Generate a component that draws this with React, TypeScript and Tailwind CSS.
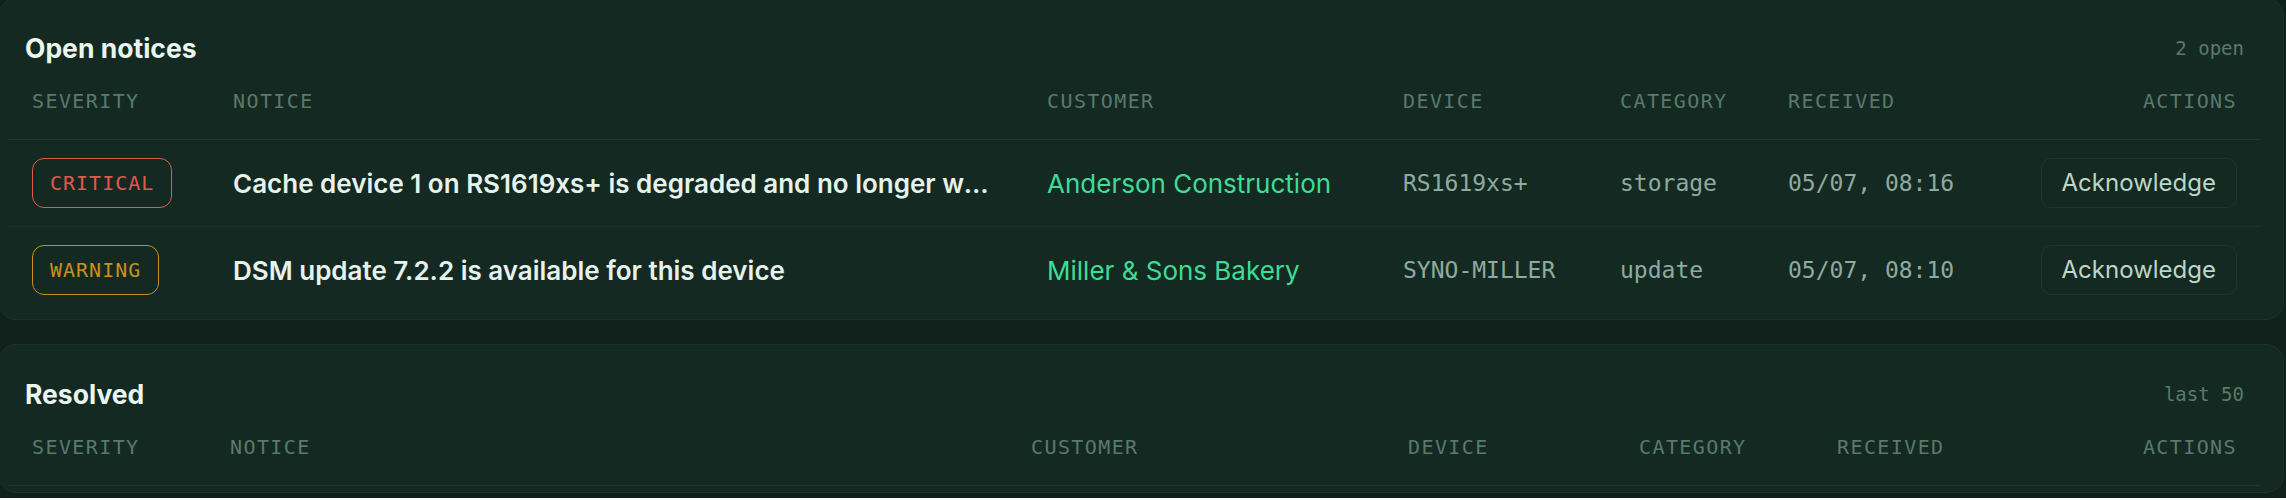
import React from 'react'

type Severity = 'critical' | 'warning'

type Notice = {
  id: string
  severity: Severity
  title: string
  customer: string
  device: string
  category: string
  received: string
}

const openNotices: Notice[] = [
  {
    id: 'n1',
    severity: 'critical',
    title: 'Cache device 1 on RS1619xs+ is degraded and no longer working properly',
    customer: 'Anderson Construction',
    device: 'RS1619xs+',
    category: 'storage',
    received: '05/07, 08:16',
  },
  {
    id: 'n2',
    severity: 'warning',
    title: 'DSM update 7.2.2 is available for this device',
    customer: 'Miller & Sons Bakery',
    device: 'SYNO-MILLER',
    category: 'update',
    received: '05/07, 08:10',
  },
]

const sans = "font-['Inter',_'Noto_Sans',_sans-serif]"
const mono = "font-['DejaVu_Sans_Mono',_'Liberation_Mono',_monospace]"

const severityStyles: Record<Severity, string> = {
  critical: 'border-[#e5574b] text-[#e5574b]',
  warning: 'border-[#c8911c] text-[#c8911c]',
}

function SeverityBadge({ severity }: { severity: Severity }) {
  return (
    <span
      className={`inline-flex h-[50px] items-center rounded-[12px] border-[1.5px] px-[17px] text-[20px] uppercase tracking-[1px] ${mono} ${severityStyles[severity]}`}
    >
      {severity}
    </span>
  )
}

const columns = ['Severity', 'Notice', 'Customer', 'Device', 'Category', 'Received', 'Actions']

function NoticeTable({ widths, rows }: { widths: number[]; rows: Notice[] }) {
  return (
    <table className="w-full table-fixed border-collapse">
      <colgroup>
        {widths.map((w, i) => (
          <col key={i} style={{ width: w }} />
        ))}
        <col />
      </colgroup>
      <thead>
        <tr className="border-b border-[#1c3830]">
          {columns.map((c) => (
            <th
              key={c}
              className={`px-[24px] pt-[21px] pb-[25px] text-left text-[20px] font-normal uppercase leading-[26px] tracking-[1.4px] text-[#587a6c] last:text-right ${mono}`}
            >
              {c}
            </th>
          ))}
        </tr>
      </thead>
      <tbody>
        {rows.map((n) => (
          <tr key={n.id} className="border-b border-[#1a322a] last:border-0">
            <td className="px-[24px] py-[18px]">
              <SeverityBadge severity={n.severity} />
            </td>
            <td className={`truncate px-[24px] text-[26px] font-semibold text-[#e6f2ec] ${sans}`}>
              {n.title}
            </td>
            <td className={`truncate px-[24px] text-[26px] text-[#3fdc98] ${sans}`}>{n.customer}</td>
            <td className={`px-[24px] text-[23px] text-[#8eab9f] ${mono}`}>{n.device}</td>
            <td className={`px-[24px] text-[23px] text-[#8eab9f] ${mono}`}>{n.category}</td>
            <td className={`whitespace-nowrap px-[24px] text-[23px] text-[#8eab9f] ${mono}`}>
              {n.received}
            </td>
            <td className="px-[24px] text-right">
              <button
                type="button"
                className={`h-[50px] whitespace-nowrap rounded-[10px] border-[1.5px] border-[#1d362e] px-[20px] text-[24px] text-[#bcd6c9] ${sans}`}
              >
                Acknowledge
              </button>
            </td>
          </tr>
        ))}
      </tbody>
    </table>
  )
}

function NoticeCard({
  title,
  meta,
  widths,
  rows,
}: {
  title: string
  meta: string
  widths: number[]
  rows: Notice[]
}) {
  return (
    <section className="rounded-[18px] border border-[#1b342b] bg-[#142922] pb-[6px]">
      <div className="flex items-center justify-between pl-[26px] pr-[39px] pt-[30px]">
        <h2 className={`text-[26.5px] font-bold leading-[38px] text-[#e9f5ef] ${sans}`}>{title}</h2>
        <span className={`text-[19px] text-[#587a6c] ${mono}`}>{meta}</span>
      </div>
      <div className="pl-[9px] pr-[22px]">
        <NoticeTable widths={widths} rows={rows} />
      </div>
    </section>
  )
}

export default function App() {
  return (
    <div className="min-h-screen bg-[#10201b]">
      <div className="-ml-[2px] -mt-[2px] mr-[2px] flex flex-col gap-[24px]">
        <NoticeCard
          title="Open notices"
          meta="2 open"
          widths={[201, 814, 356, 217, 168, 249]}
          rows={openNotices}
        />
        <NoticeCard
          title="Resolved"
          meta="last 50"
          widths={[198, 801, 377, 231, 198, 200]}
          rows={[]}
        />
      </div>
    </div>
  )
}
